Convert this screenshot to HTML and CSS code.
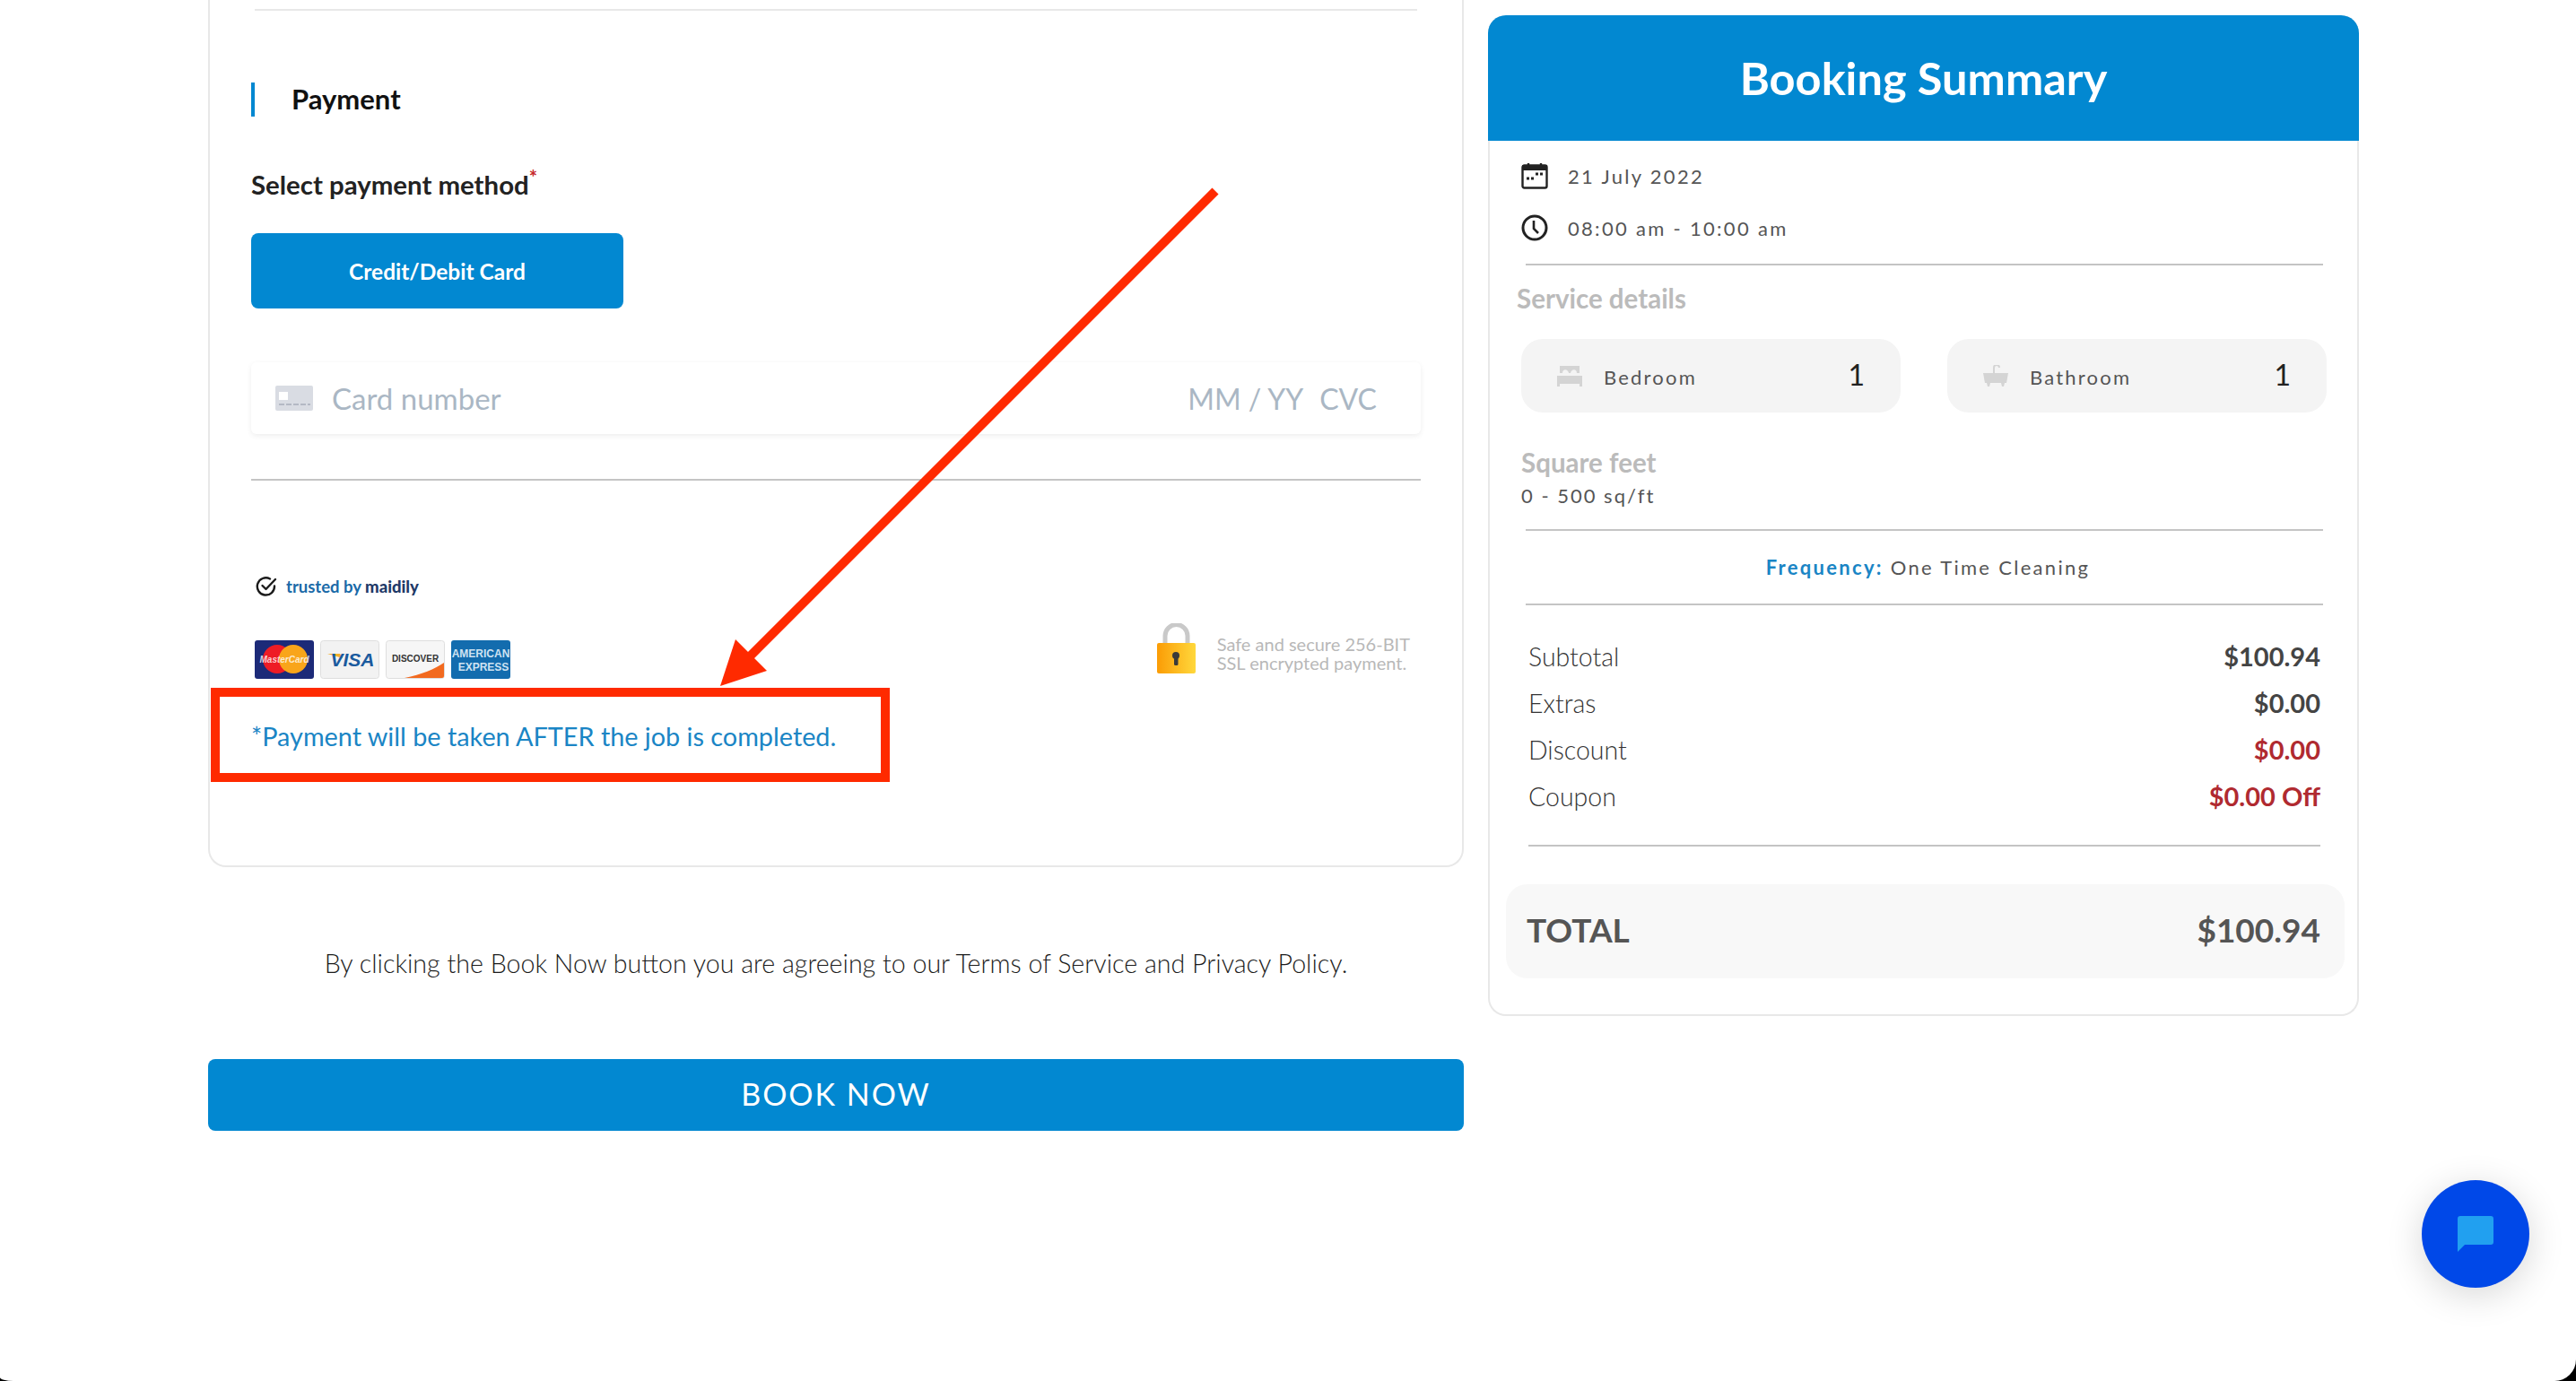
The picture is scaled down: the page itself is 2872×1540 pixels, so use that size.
FILE: index.html
```html
<!DOCTYPE html>
<html lang="en">
<head>
    <meta charset="UTF-8">
    <title>Booking</title>
    <link rel="stylesheet" href="styles.css">
</head>
<body>
    <div class="page">
        <div class="columns">
            <div class="left-col">
                <div class="payment-card">
                    <div class="top-line"></div>
                    <div class="section-title">Payment</div>
                    <div class="method-label">Select payment method<sup>*</sup></div>
                    <button class="method-btn">Credit/Debit Card</button>
                    <div class="card-input">
                        <svg class="card-icon" viewBox="0 0 42 28">
                            <rect width="42" height="28" rx="2" fill="#d9dce3"/>
                            <rect x="4" y="7" width="10" height="9" fill="#fff"/>
                            <path d="M4 21h6M12 21h6M20 21h6M28 21h6M36 21h3" stroke="#b4b9c4" stroke-width="2"/>
                        </svg>
                        <span class="card-placeholder card-number">Card number</span>
                        <span class="card-placeholder card-right">MM / YY</span>
                        <span class="card-placeholder card-cvc">CVC</span>
                    </div>
                    <div class="card-line"></div>
                    <div class="trusted">
                        <svg class="trusted-icon" viewBox="0 0 24 24" fill="none" stroke="#1b1b1b" stroke-width="2.4" stroke-linecap="round" stroke-linejoin="round">
                            <path d="M21 11.5a9.6 9.6 0 1 1-5-8"/>
                            <path d="M7.5 11l4 4L22 4"/>
                        </svg>
                        <span class="trusted-text">trusted by <b>maidily</b></span>
                    </div>
                    <div class="secure-row">
                        <div class="brands">
                            <svg class="brand" viewBox="0 0 66 43">
                                <rect width="66" height="43" rx="3" fill="#1c2a78"/>
                                <circle cx="25" cy="21" r="16" fill="#ee1c25"/>
                                <circle cx="43" cy="21" r="16" fill="#f9a51a"/>
                                <text x="33" y="25" class="brand-mc">MasterCard</text>
                            </svg>
                            <svg class="brand" viewBox="0 0 66 43">
                                <rect x="0.5" y="0.5" width="65" height="42" rx="3" fill="#f2f2f2" stroke="#dedede"/>
                                <path d="M8 15h14l3 5z" fill="#f3b02c"/>
                                <text x="36" y="29" class="brand-visa">VISA</text>
                            </svg>
                            <svg class="brand" viewBox="0 0 66 43">
                                <rect x="0.5" y="0.5" width="65" height="42" rx="3" fill="#f6f6f6" stroke="#dedede"/>
                                <path d="M21 42C40 38 55 32 65 25v15a2 2 0 0 1-2 2z" fill="#f26a1f"/>
                                <text x="33" y="24" class="brand-disc">DISCOVER</text>
                            </svg>
                            <svg class="brand" viewBox="0 0 66 43">
                                <rect width="66" height="43" rx="3" fill="#136cae"/>
                                <text x="33" y="19" class="brand-amex">AMERICAN</text>
                                <text x="36" y="34" class="brand-amex">EXPRESS</text>
                            </svg>
                        </div>
                        <div class="ssl">
                            <svg class="lock" viewBox="0 0 45 57">
                                <defs>
                                    <linearGradient id="lockBody" x1="0" x2="1" y1="0" y2="0">
                                        <stop offset="0" stop-color="#fb9c05"/>
                                        <stop offset="1" stop-color="#ffd83c"/>
                                    </linearGradient>
                                </defs>
                                <path d="M10 24V14a12 12 0 0 1 25 0v10" fill="none" stroke="#c9c9c9" stroke-width="5"/>
                                <rect x="1" y="22" width="43" height="34" rx="2" fill="url(#lockBody)"/>
                                <circle cx="22" cy="36" r="4" fill="#3a3a3a"/>
                                <rect x="20" y="37" width="4.5" height="10" rx="1.5" fill="#3a3a3a"/>
                            </svg>
                            <div class="ssl-text">Safe and secure 256-BIT<br>SSL encrypted payment.</div>
                        </div>
                    </div>
                    <div class="notice">*Payment will be taken AFTER the job is completed.</div>
                </div>
                <p class="terms">By clicking the Book Now button you are agreeing to our Terms of Service and Privacy Policy.</p>
                <button class="book-btn">BOOK NOW</button>
            </div>

            <div class="summary-card">
                <div class="summary-head">Booking Summary</div>
                <div class="summary-body">
                    <div class="when-row">
                        <svg class="when-icon" viewBox="0 0 30 30">
                            <rect x="1.5" y="3.5" width="27" height="25" rx="2" fill="#fff" stroke="#222" stroke-width="2.4"/>
                            <rect x="1" y="3" width="28" height="6" fill="#222"/>
                            <path d="M8 1v4M22 1v4" stroke="#222" stroke-width="2.4"/>
                            <path d="M6 18h3M11 18h3M16 13h3M21 13h3" stroke="#222" stroke-width="3"/>
                        </svg>
                        <span>21 July 2022</span>
                    </div>
                    <div class="when-row">
                        <svg class="when-icon" viewBox="0 0 30 30" fill="none" stroke="#222" stroke-width="3">
                            <circle cx="15" cy="15" r="13"/>
                            <path d="M14 7v9l5 5" stroke-width="2.6"/>
                        </svg>
                        <span>08:00 am - 10:00 am</span>
                    </div>
                    <div class="rule"></div>
                    <div class="muted-title service-title">Service details</div>
                    <div class="pills">
                        <div class="pill">
                            <svg class="pill-icon" viewBox="0 0 28 24" fill="#d4d4d4">
                                <path d="M3 1h22v8H3z"/>
                                <path d="M0 12h28v9H0z"/>
                                <path d="M0 21h3v3H0zM25 21h3v3h-3z"/>
                                <path d="M6 9c0-5 6-5 7 0zM15 9c1-5 7-5 7 0z" fill="#f4f4f4"/>
                            </svg>
                            <span class="pill-name">Bedroom</span>
                            <span class="pill-num">1</span>
                        </div>
                        <div class="pill">
                            <svg class="pill-icon" viewBox="0 0 28 24" fill="#d4d4d4">
                                <path d="M0 9h28l-2 11H2z"/>
                                <path d="M4 20h4l-1 4H5zM20 20h4l-1 4h-2z"/>
                                <path d="M12 9V3a3 3 0 0 1 6 0" fill="none" stroke="#d4d4d4" stroke-width="2"/>
                            </svg>
                            <span class="pill-name">Bathroom</span>
                            <span class="pill-num">1</span>
                        </div>
                    </div>
                    <div class="muted-title square-title">Square feet</div>
                    <div class="square-val">0 - 500 sq/ft</div>
                    <div class="rule rule-square"></div>
                    <div class="frequency"><b>Frequency:</b> One Time Cleaning</div>
                    <div class="rule rule-freq"></div>
                    <div class="prices">
                        <div class="price-row"><span>Subtotal</span><b>$100.94</b></div>
                        <div class="price-row"><span>Extras</span><b>$0.00</b></div>
                        <div class="price-row"><span>Discount</span><b class="red">$0.00</b></div>
                        <div class="price-row"><span>Coupon</span><b class="red">$0.00 Off</b></div>
                    </div>
                    <div class="rule rule-prices"></div>
                    <div class="total"><span>TOTAL</span><span>$100.94</span></div>
                </div>
            </div>
        </div>

        <svg class="arrow" viewBox="0 0 2872 1540">
            <path d="M1355 213L836 732" stroke="#ff2a00" stroke-width="10" fill="none"/>
            <path d="M803 765L820 713L855 748z" fill="#ff2a00"/>
        </svg>
        <div class="red-box"></div>

        <div class="chat-btn">
            <svg viewBox="0 0 40 40" class="chat-icon">
                <path d="M3 0h34a3 3 0 0 1 3 3v26a3 3 0 0 1-3 3H8l-8 8V3a3 3 0 0 1 3-3z" fill="#21a0f0"/>
            </svg>
        </div>
    </div>
</body>
</html>
```

FILE: styles.css
```css
html, body {
    margin: 0;
    padding: 0;
    height: 100%;
    background: #000;
    font-family: Lato, "Open Sans", Arial, sans-serif;
    overflow: hidden;
}

.page {
    position: relative;
    height: 1540px;
    background: #fff;
    border-radius: 0 0 24px 15px / 0 0 24px 4px;
    overflow: hidden;
}

.columns {
    display: flex;
    align-items: flex-start;
    gap: 27px;
    padding-left: 232px;
}

.left-col {
    width: 1400px;
}

.payment-card {
    box-sizing: border-box;
    height: 967px;
    border: 2px solid #e8e8e8;
    border-top: none;
    border-radius: 0 0 20px 20px;
    padding: 10px 46px 0;
}

.top-line {
    height: 2px;
    margin-left: 4px;
    margin-right: 4px;
    background: #e8e8e8;
}

.section-title {
    margin-top: 80px;
    height: 38px;
    line-height: 36px;
    border-left: 4px solid #0288d1;
    padding-left: 41px;
    font-size: 31px;
    font-weight: 700;
    color: #111;
}

.method-label {
    margin-top: 56px;
    line-height: 40px;
    font-size: 29.4px;
    font-weight: 700;
    color: #222;
}

.method-label sup {
    color: #c62828;
    font-size: 22px;
    line-height: 0;
}

.method-btn {
    display: block;
    margin-top: 34px;
    width: 415px;
    height: 84px;
    border: none;
    border-radius: 8px;
    background: #0288d1;
    color: #fff;
    font-family: inherit;
    font-size: 24.5px;
    font-weight: 700;
}

.card-input {
    display: flex;
    align-items: center;
    box-sizing: border-box;
    margin-top: 60px;
    width: 1304px;
    height: 80px;
    padding-left: 27px;
    border-radius: 6px;
    background: #fff;
    box-shadow: 0 2px 6px rgba(0, 0, 0, 0.07);
}

.card-icon {
    width: 42px;
    height: 28px;
    margin-right: 21px;
}

.card-placeholder {
    font-size: 32px;
    color: #aab7c4;
}

.card-number {
    font-size: 33px;
}

.card-right {
    margin-left: auto;
}

.card-cvc {
    margin-left: 18px;
    margin-right: 49px;
}

.card-line {
    margin-top: 50px;
    width: 1304px;
    height: 2px;
    background: #c4c4c4;
}

.trusted {
    display: flex;
    align-items: center;
    margin-top: 106px;
    margin-left: 5px;
    height: 24px;
}

.trusted-icon {
    width: 24px;
    height: 24px;
    margin-right: 10px;
}

.trusted-text {
    font-size: 18.5px;
    font-weight: 700;
    color: #1a6aa8;
}

.trusted-text b {
    color: #1f3a68;
}

.secure-row {
    display: flex;
    justify-content: space-between;
    align-items: flex-start;
    width: 1288px;
    margin-top: 36px;
    margin-left: 4px;
}

.brands {
    display: flex;
    gap: 7px;
    margin-top: 12px;
}

.brand {
    width: 66px;
    height: 43px;
}

.brand text {
    font-family: "Liberation Sans", sans-serif;
    text-anchor: middle;
}

.brand-mc {
    font-size: 10px;
    font-weight: 700;
    font-style: italic;
    fill: #fff;
    fill-opacity: 0.8;
}

.brand-visa {
    font-size: 21px;
    font-weight: 700;
    font-style: italic;
    fill: #1a5a9e;
}

.brand-disc {
    font-size: 10px;
    font-weight: 700;
    fill: #333;
}

.brand-amex {
    font-size: 12px;
    font-weight: 700;
    fill: #cfe3f2;
}

.ssl {
    display: flex;
    align-items: center;
    gap: 23px;
    margin-top: -7px;
}

.lock {
    width: 45px;
    height: 57px;
}

.ssl-text {
    font-size: 20px;
    line-height: 21px;
    color: #b8b8b8;
    margin-top: 10px;
}

.notice {
    margin-top: 46px;
    line-height: 36px;
    font-size: 28.8px;
    color: #1a85c5;
}

.terms {
    margin: 89px 0 0;
    line-height: 36px;
    text-align: center;
    font-size: 28.6px;
    font-weight: 300;
    color: #1c1c1c;
}

.book-btn {
    display: block;
    margin-top: 89px;
    width: 1400px;
    height: 80px;
    padding: 0 0 3px;
    border: none;
    border-radius: 8px;
    background: #0288d1;
    color: #fff;
    font-family: inherit;
    font-size: 34px;
    letter-spacing: 2px;
}

.summary-card {
    box-sizing: border-box;
    width: 971px;
    height: 1116px;
    margin-top: 17px;
    border: 2px solid #e8e8e8;
    border-top: none;
    border-radius: 20px;
}

.summary-head {
    margin: 0 -2px;
    height: 140px;
    line-height: 140px;
    border-radius: 20px 20px 0 0;
    background: #0288d1;
    color: #fff;
    text-align: center;
    font-size: 50.5px;
    font-weight: 700;
}

.summary-body {
    padding-top: 24px;
}

.when-row {
    display: flex;
    align-items: center;
    height: 30px;
    margin-bottom: 28px;
    margin-left: 35px;
    font-size: 22px;
    letter-spacing: 2.3px;
    color: #555;
}

.when-row + .when-row {
    margin-bottom: 25px;
}

.when-icon {
    width: 30px;
    height: 30px;
    margin-right: 22px;
}

.rule {
    height: 2px;
    margin-left: 40px;
    margin-right: 38px;
    background: #c4c4c4;
}

.muted-title {
    font-size: 29.5px;
    font-weight: 700;
    color: #bbb;
    line-height: 36px;
}

.service-title {
    margin-top: 19px;
    margin-left: 30px;
}

.pills {
    display: flex;
    gap: 52px;
    margin-top: 27px;
    margin-left: 35px;
}

.pill {
    box-sizing: border-box;
    display: flex;
    align-items: center;
    width: 423px;
    height: 82px;
    padding: 0 40px;
    border-radius: 24px;
    background: #f4f4f4;
}

.pill-icon {
    width: 28px;
    height: 24px;
    margin-right: 24px;
}

.pill-name {
    font-size: 22px;
    letter-spacing: 2.2px;
    color: #555;
    padding-top: 2px;
}

.pill-num {
    margin-left: auto;
    font-size: 32px;
    color: #222;
    padding-bottom: 4px;
}

.square-title {
    margin-top: 38px;
    margin-left: 35px;
}

.square-val {
    margin-top: 4px;
    margin-left: 35px;
    line-height: 30px;
    font-size: 22px;
    letter-spacing: 2px;
    color: #555;
}

.rule-square {
    margin-top: 22px;
}

.frequency {
    margin-top: 23px;
    line-height: 36px;
    text-align: center;
    font-size: 22px;
    letter-spacing: 2.3px;
    color: #555;
    padding-left: 10px;
}

.frequency b {
    color: #1a85c5;
}

.rule-freq {
    margin-top: 22px;
}

.prices {
    margin-top: 31px;
    padding: 0 41px 0 43px;
}

.price-row {
    display: flex;
    justify-content: space-between;
    height: 52px;
    line-height: 52px;
    font-size: 28.5px;
    font-weight: 300;
    color: #333;
}

.price-row b {
    font-size: 29px;
    font-weight: 700;
    color: #444;
}

.price-row .red {
    color: #b02a30;
}

.rule-prices {
    margin-top: 28px;
    margin-left: 43px;
    margin-right: 41px;
}

.total {
    display: flex;
    align-items: center;
    justify-content: space-between;
    box-sizing: border-box;
    height: 105px;
    margin: 42px 14px 0 18px;
    padding: 0 27px 5px 23px;
    border-radius: 24px;
    background: #f8f8f8;
    font-size: 37px;
    font-weight: 700;
    color: #555;
}

/* annotation drawn over the screenshot */
.arrow {
    position: absolute;
    left: 0;
    top: 0;
    width: 2872px;
    height: 1540px;
    pointer-events: none;
}

.red-box {
    position: absolute;
    left: 235px;
    top: 767px;
    width: 757px;
    height: 105px;
    box-sizing: border-box;
    border: 10px solid #ff2a00;
}

.chat-btn {
    position: absolute;
    left: 2700px;
    top: 1316px;
    display: flex;
    align-items: center;
    justify-content: center;
    width: 120px;
    height: 120px;
    border-radius: 50%;
    background: #0048e8;
    box-shadow: 0 8px 40px rgba(0, 0, 0, 0.16);
}

.chat-icon {
    width: 40px;
    height: 40px;
}
```
